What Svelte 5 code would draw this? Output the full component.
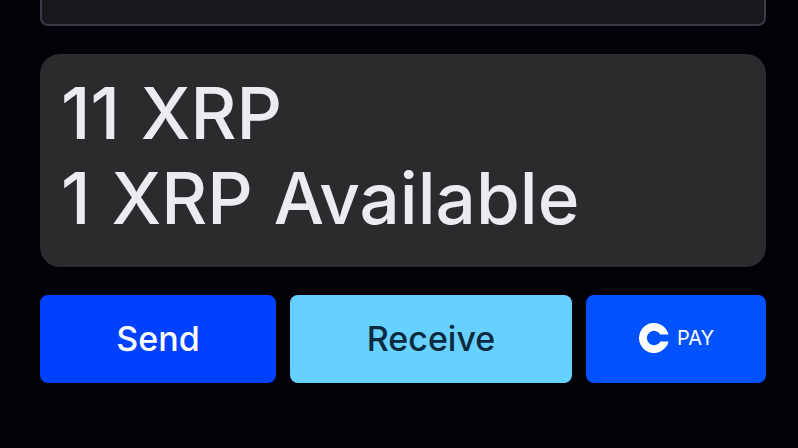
<script>
  const lines = ['11 XRP', '1 XRP Available'];
</script>

<main class="page">
  <div class="panel"></div>

  <section class="balance">
    {#each lines as line}
      <p>{line}</p>
    {/each}
  </section>

  <div class="actions">
    <button class="btn send">Send</button>
    <button class="btn receive">Receive</button>
    <button class="btn pay">
      <svg width="30" height="30" viewBox="0 0 30 30" aria-hidden="true">
        <path
          fill="#fff"
          d="M29.6 11.6A15 15 0 1 0 29.6 18.4H21.35A7.2 7.2 0 1 1 21.35 11.6Z"
        />
      </svg>
      <span>PAY</span>
    </button>
  </div>
</main>

<style>
  :global(body) {
    background: #020108;
  }

  .page {
    width: 798px;
    height: 448px;
    box-sizing: border-box;
    padding: 0 32px 0 40px;
    overflow: hidden;
    display: flex;
    flex-direction: column;
    font-family: Inter, 'Liberation Sans', sans-serif;
  }

  .panel {
    height: 26px;
    flex: none;
    box-sizing: border-box;
    border: 2px solid #3a3b47;
    border-top: 0;
    border-radius: 0 0 8px 8px;
    background: #17181c;
  }

  .balance {
    margin-top: 28px;
    height: 213px;
    flex: none;
    box-sizing: border-box;
    padding: 17px 21px;
    border-radius: 20px;
    background: #2b2b2d;
    color: #ebebf0;
    font-size: 71px;
    font-weight: 500;
    line-height: 85px;
    word-spacing: 2px;
  }

  .balance p {
    margin: 0;
    white-space: nowrap;
  }

  .actions {
    margin-top: 28px;
    display: flex;
    gap: 14px;
    height: 88px;
    flex: none;
  }

  .btn {
    border: 0;
    border-radius: 8px;
    padding: 0 0 2px;
    font-family: inherit;
    font-size: 34px;
    font-weight: 500;
    display: flex;
    align-items: center;
    justify-content: center;
  }

  .send {
    width: 236px;
    background: #0040ff;
    color: #fff;
  }

  .receive {
    width: 282px;
    background: #66d0ff;
    color: #0a2a40;
  }

  .pay {
    width: 180px;
    gap: 8px;
    background: #0052ff;
    color: #fff;
  }

  .pay svg {
    margin-left: 1px;
  }

  .pay span {
    font-size: 20px;
    font-weight: 400;
  }
</style>
